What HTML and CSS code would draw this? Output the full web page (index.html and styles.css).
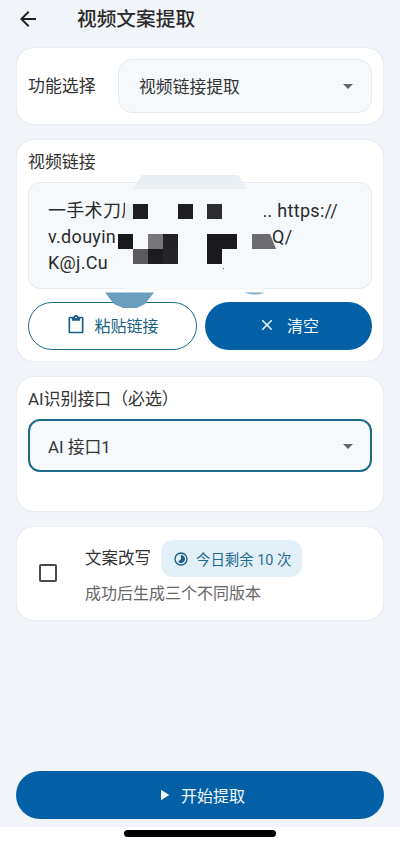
FILE: index.html
```html
<!DOCTYPE html>
<html lang="zh-CN">
<head>
<meta charset="utf-8">
<title>视频文案提取</title>
<link rel="stylesheet" href="styles.css">
</head>
<body>
<div class="page">
  <header class="app-bar">
    <svg class="back-icon" viewBox="0 0 24 24"><path d="M20 11H7.83l5.59-5.59L12 4l-8 8 8 8 1.41-1.41L7.83 13H20v-2z"/></svg>
    <h1 class="title">视频文案提取</h1>
  </header>

  <main class="content">
    <section class="card card-mode">
      <span class="label">功能选择</span>
      <div class="select select-mode">
        <span>视频链接提取</span>
        <svg class="caret" viewBox="0 0 24 24"><path d="M7 10l5 5 5-5z"/></svg>
      </div>
    </section>

    <section class="card card-link">
      <div class="label">视频链接</div>
      <div class="link-field">
        <div>一手术刀厉<span class="skip-a">.. https://</span></div>
        <div>v.douyin<span class="skip-b">Q/</span></div>
        <div>K@j.Cu</div>
      </div>
      <div class="actions">
        <button class="btn btn-outline">
          <svg class="btn-icon" viewBox="0 0 24 24"><path d="M19 2h-4.18C14.4.84 13.3 0 12 0S9.6.84 9.18 2H5c-1.1 0-2 .9-2 2v16c0 1.1.9 2 2 2h14c1.1 0 2-.9 2-2V4c0-1.1-.9-2-2-2zm-7 0c.55 0 1 .45 1 1s-.45 1-1 1-1-.45-1-1 .45-1 1-1zm7 18H5V4h2v3h10V4h2v16z"/></svg>
          <span>粘贴链接</span>
        </button>
        <button class="btn btn-solid">
          <svg class="btn-icon" viewBox="0 0 24 24"><path d="M19 6.41L17.59 5 12 10.59 6.41 5 5 6.41 10.59 12 5 17.59 6.41 19 12 13.41 17.59 19 19 17.59 13.41 12z"/></svg>
          <span>清空</span>
        </button>
      </div>
      <svg class="mosaic" viewBox="0 0 190 140">
        <polygon class="m-pale" points="42,5 138,5 147,19 33,19"/>
        <rect class="m-cover" x="25" y="19" width="139" height="103"/>
        <rect class="m-pale" x="25" y="34" width="10" height="16"/>
        <polygon class="m-white" points="25,120 160,120 168,131 22,131"/>
        <polygon class="m-blob" points="5,122.500 54,122.500 45,134 37,138 23,138 14,134"/>
        <path class="m-blob2" d="M144 122.500h21q-10 4-21 0z"/>
        <rect fill="#1e1e22" x="33" y="34" width="15" height="15"/>
        <rect fill="#1e1e22" x="78" y="34" width="15" height="15"/>
        <rect fill="#2d2d31" x="107" y="34" width="15" height="15"/>
        <rect fill="#1a1a1e" x="18" y="64" width="15" height="15"/>
        <rect fill="#77777b" x="48" y="64" width="15" height="15"/>
        <rect fill="#232327" x="63" y="64" width="15" height="15"/>
        <rect fill="#1a1a1e" x="107" y="64" width="30" height="15"/>
        <rect fill="#5a5a5e" x="33" y="79" width="15" height="15"/>
        <rect fill="#1c1c20" x="48" y="79" width="15" height="15"/>
        <rect fill="#262629" x="63" y="79" width="15" height="15"/>
        <rect fill="#1a1a1e" x="107" y="79" width="15" height="15"/>
        <polygon fill="#6c6c70" points="152,64 170,64 176,79 152,79"/>
        <rect fill="#555" x="123" y="98" width="1" height="1"/>
      </svg>
    </section>

    <section class="card card-api">
      <div class="label">AI识别接口（必选）</div>
      <div class="select select-api">
        <span>AI 接口1</span>
        <svg class="caret" viewBox="0 0 24 24"><path d="M7 10l5 5 5-5z"/></svg>
      </div>
    </section>

    <section class="card card-rewrite">
      <span class="checkbox"></span>
      <div class="rewrite-body">
        <div class="rewrite-head">
          <span class="rewrite-title">文案改写</span>
          <span class="chip">
            <svg class="chip-icon" viewBox="0 0 24 24"><path d="M12 2a10 10 0 1 0 0 20 10 10 0 0 0 0-20zm0 18a8 8 0 1 1 0-16 8 8 0 0 1 0 16z"/><path d="M12 6v6l-4.2 4.200A6 6 0 1 0 12 6z"/></svg>
            <span>今日剩余 10 次</span>
          </span>
        </div>
        <div class="rewrite-sub">成功后生成三个不同版本</div>
      </div>
    </section>
  </main>

  <div class="footer">
    <button class="btn-start">
      <svg class="btn-icon" viewBox="0 0 24 24"><path d="M8 5v14l11-7z"/></svg>
      <span>开始提取</span>
    </button>
  </div>
  <div class="nav-area"><span class="home-bar"></span></div>
</div>
</body>
</html>
```

FILE: styles.css
```css
* { box-sizing: border-box; }

html, body {
  margin: 0;
  padding: 0;
}

body {
  font-family: Roboto, "Noto Sans CJK SC", sans-serif;
  color: #333;
  background: #f1f4f9;
}

.page {
  width: 400px;
  height: 843px;
  display: flex;
  flex-direction: column;
  overflow: hidden;
}

.app-bar {
  height: 48px;
  flex: none;
  display: flex;
  align-items: flex-start;
  padding: 7px 0 0 16px;
}

.back-icon {
  width: 24px;
  height: 24px;
  fill: #222;
}

.title {
  margin: 1px 0 0 37px;
  font-size: 19.700px;
  font-weight: 500;
  line-height: 24px;
  color: #2b2b2b;
}

.content {
  flex: 1;
  padding: 0 17px;
  display: flex;
  flex-direction: column;
  gap: 16px;
}

.card {
  width: 366px;
  background: #fff;
  border: 1px solid #fff;
  border-radius: 16px;
  box-shadow: 0 0 1.500px rgba(60, 80, 110, 0.180);
  padding: 11px 10px;
}

.label {
  font-size: 16.900px;
  line-height: 20px;
  color: #333;
}

.select {
  display: flex;
  align-items: center;
  justify-content: space-between;
  background: #f5f9fc;
  font-size: 16.800px;
  color: #333;
  padding: 0 15px 0 20px;
}

.caret {
  width: 24px;
  height: 24px;
  fill: #666;
  margin-right: -4px;
}

.card-mode {
  height: 76px;
  display: flex;
  align-items: center;
  gap: 22.500px;
}

.select-mode {
  flex: 1;
  height: 54px;
  border: 1px solid #e4eaef;
  border-radius: 14px;
}

.card-link {
  height: 221px;
  position: relative;
}

.link-field {
  margin-top: 10px;
  height: 107px;
  background: #f5f9fc;
  border: 1px solid #e4eaef;
  border-radius: 12px;
  padding: 15px 19px;
  font-size: 18px;
  line-height: 26px;
  letter-spacing: 0.300px;
  color: #2b2b2b;
}

.skip-a { margin-left: 123px; }
.skip-b { margin-left: 156px; }

.actions {
  margin-top: 13px;
  display: flex;
  gap: 8px;
}

.btn {
  flex: 1;
  height: 48px;
  border-radius: 24px;
  display: flex;
  align-items: center;
  justify-content: center;
  gap: 8px;
  font-family: inherit;
  font-size: 16px;
  padding: 0 0 2px;
}

.btn-icon {
  width: 18px;
  height: 18px;
  fill: currentColor;
}

.btn-outline {
  background: #fff;
  border: 1.500px solid #1f6a8c;
  color: #1a5f83;
}

.btn-outline .btn-icon {
  width: 20px;
  height: 20px;
}

.btn-solid {
  background: #0360a6;
  border: 0;
  color: #f2f7fb;
  gap: 11px;
}

.mosaic {
  position: absolute;
  left: 82px;
  top: 29px;
  width: 190px;
  height: 140px;
}

.m-pale { fill: #e9eef2; }
.m-cover { fill: #f6f9fc; }
.m-white { fill: #fff; }
.m-blob { fill: #6a9dbe; }
.m-blob2 { fill: #7aa8c4; }

.card-api {
  height: 134px;
}

.select-api {
  margin-top: 10px;
  height: 53px;
  border: 2px solid #1d6a8d;
  border-radius: 12px;
  padding-left: 18px;
  padding-right: 14px;
}

.card-rewrite {
  height: 93px;
  display: flex;
  align-items: center;
  padding: 0 0 2px 21px;
}

.checkbox {
  width: 18px;
  height: 18px;
  margin-top: 1px;
  border: 2px solid #4a4a4a;
  border-radius: 2px;
  flex: none;
}

.rewrite-body {
  margin-left: 28px;
  display: flex;
  flex-direction: column;
}

.rewrite-head {
  display: flex;
  align-items: center;
  gap: 10px;
}

.rewrite-title {
  font-size: 16.500px;
  line-height: 24px;
  color: #333;
}

.chip {
  height: 37px;
  width: 141px;
  border-radius: 12px;
  background: #e3f0f8;
  display: flex;
  align-items: center;
  gap: 7px;
  padding-left: 12px;
  font-size: 14.400px;
  color: #1f6a8f;
}

.chip-icon {
  width: 16px;
  height: 16px;
  fill: #1a5f83;
}

.rewrite-sub {
  margin-top: 6px;
  font-size: 16px;
  line-height: 22px;
  color: #666;
}

.footer {
  flex: none;
  height: 56px;
  padding: 0 16px 8px;
}

.btn-start {
  width: 368px;
  height: 48px;
  border: 0;
  border-radius: 24px;
  background: #0360a6;
  color: #f2f7fb;
  display: flex;
  align-items: center;
  justify-content: center;
  gap: 8px;
  font-family: inherit;
  font-size: 16px;
  padding: 0 0 1px;
}

.nav-area {
  flex: none;
  height: 16px;
  background: #fff;
  display: flex;
  justify-content: center;
  padding: 3px 1px 0 0;
}

.home-bar {
  width: 152px;
  height: 7px;
  border-radius: 3.500px;
  background: #000;
}
```
